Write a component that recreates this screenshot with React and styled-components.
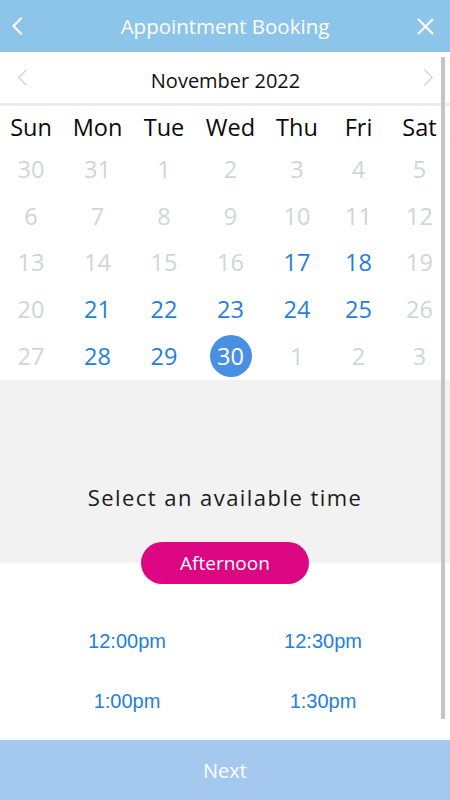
import React from "react";
import styled, { createGlobalStyle } from "styled-components";

const Global = createGlobalStyle`
  html, body { margin: 0; padding: 0; background: #fff; }
  body { font-family: "Open Sans", "Noto Sans", sans-serif; }
  * { box-sizing: border-box; }
`;

const Screen = styled.div`
  position: relative;
  width: 450px;
  height: 800px;
  display: flex;
  flex-direction: column;
  overflow: hidden;
  background: #fff;
`;

const Header = styled.header`
  height: 52px;
  background: #8dc5ea;
  display: grid;
  grid-template-columns: 1fr auto 1fr;
  align-items: center;
  padding: 0 12px;
  color: #fff;
`;

const Title = styled.h1`
  margin: 0;
  font-size: 20.5px;
  font-weight: 400;
  color: #fff;
`;

const IconBtn = styled.div`
  width: 26px;
  height: 26px;
  display: flex;
  align-items: center;
  justify-content: ${(p) => (p.$end ? "center" : "flex-start")};
  justify-self: ${(p) => (p.$end ? "end" : "start")};
`;

const MonthBar = styled.div`
  height: 54px;
  display: flex;
  align-items: center;
  justify-content: space-between;
  padding: 0 16px 0 17px;
  border-bottom: 3px solid #ececec;
`;

const MonthTitle = styled.div`
  font-size: 20px;
  color: #111;
  padding-top: 5px;
`;

const Grid = styled.div`
  display: grid;
  grid-template-columns: 62px 71px 62px 71px 62px 61px 61px;
  grid-template-rows: 38px repeat(5, 46.6px);
  padding-top: 2px;
  height: 274px;
`;

const DayHead = styled.div`
  display: flex;
  align-items: center;
  justify-content: center;
  font-size: 23.5px;
  color: #0a0a0a;
`;

const DayCell = styled.div`
  display: flex;
  align-items: center;
  justify-content: center;
  font-size: 23.5px;
  color: ${(p) => (p.$active ? "#1f80dc" : "#cfd5d8")};
`;

const Selected = styled.span`
  width: 42px;
  height: 42px;
  border-radius: 50%;
  background: #4a90e2;
  color: #fff;
  display: flex;
  align-items: center;
  justify-content: center;
  font-size: 23.5px;
`;

const TimePanel = styled.section`
  background: #f2f2f2;
  height: 183px;
  display: flex;
  flex-direction: column;
  align-items: center;
  justify-content: flex-end;
  padding-bottom: 51px;
`;

const Prompt = styled.div`
  font-size: 22px;
  letter-spacing: 1.45px;
  color: #1a1a1a;
`;

const PillRow = styled.div`
  display: flex;
  justify-content: center;
  margin-top: -21px;
  position: relative;
`;

const Pill = styled.div`
  width: 168px;
  height: 42px;
  border-radius: 21px;
  background: #dc0582;
  color: #fff;
  font-size: 19px;
  display: flex;
  align-items: center;
  justify-content: center;
`;

const Slots = styled.div`
  display: grid;
  grid-template-columns: 196px 196px;
  grid-auto-rows: 60px;
  padding: 27px 0 0 29px;
  flex: 1;
`;

const Slot = styled.div`
  display: flex;
  align-items: center;
  justify-content: center;
  font-family: "Liberation Sans", Arial, sans-serif;
  font-size: 20px;
  color: #1f80dc;
`;

const NextBar = styled.div`
  height: 60px;
  background: #a5c8ef;
  color: #fff;
  font-size: 20px;
  display: flex;
  align-items: center;
  justify-content: center;
`;

const Scrollbar = styled.div`
  position: absolute;
  left: 441px;
  top: 57px;
  width: 4px;
  height: 662px;
  background: #c4c4c4;
`;

const Chevron = ({ dir, color, sw, w, h }) => (
  <svg width={w} height={h} viewBox="0 0 10 17" fill="none">
    {dir === "left" ? (
      <polyline points="9,0.8 1.2,8.5 9,16.2" stroke={color} strokeWidth={sw} />
    ) : (
      <polyline points="1,0.8 8.8,8.5 1,16.2" stroke={color} strokeWidth={sw} />
    )}
  </svg>
);

const heads = ["Sun", "Mon", "Tue", "Wed", "Thu", "Fri", "Sat"];
const days = [
  [30, 0], [31, 0], [1, 0], [2, 0], [3, 0], [4, 0], [5, 0],
  [6, 0], [7, 0], [8, 0], [9, 0], [10, 0], [11, 0], [12, 0],
  [13, 0], [14, 0], [15, 0], [16, 0], [17, 1], [18, 1], [19, 0],
  [20, 0], [21, 1], [22, 1], [23, 1], [24, 1], [25, 1], [26, 0],
  [27, 0], [28, 1], [29, 1], [30, 2], [1, 0], [2, 0], [3, 0],
];
const slots = ["12:00pm", "12:30pm", "1:00pm", "1:30pm"];

export default function App() {
  return (
    <>
      <Global />
      <Screen>
        <Header>
          <IconBtn>
            <Chevron dir="left" color="#fff" sw={2} w={11} h={18} />
          </IconBtn>
          <Title>Appointment Booking</Title>
          <IconBtn $end>
            <svg width="17" height="17" viewBox="0 0 17 17">
              <path d="M1 1L16 16M16 1L1 16" stroke="#fff" strokeWidth="2.2" />
            </svg>
          </IconBtn>
        </Header>
        <MonthBar>
          <Chevron dir="left" color="#d0d0d0" sw={1.2} w={11} h={17} />
          <MonthTitle>November 2022</MonthTitle>
          <Chevron dir="right" color="#d0d0d0" sw={1.2} w={11} h={17} />
        </MonthBar>
        <Grid>
          {heads.map((h) => (
            <DayHead key={h}>{h}</DayHead>
          ))}
          {days.map(([d, s], i) => (
            <DayCell key={i} $active={s === 1}>
              {s === 2 ? <Selected>{d}</Selected> : d}
            </DayCell>
          ))}
        </Grid>
        <TimePanel>
          <Prompt>Select an available time</Prompt>
        </TimePanel>
        <PillRow>
          <Pill>Afternoon</Pill>
        </PillRow>
        <Slots>
          {slots.map((s) => (
            <Slot key={s}>{s}</Slot>
          ))}
        </Slots>
        <NextBar>Next</NextBar>
        <Scrollbar />
      </Screen>
    </>
  );
}
